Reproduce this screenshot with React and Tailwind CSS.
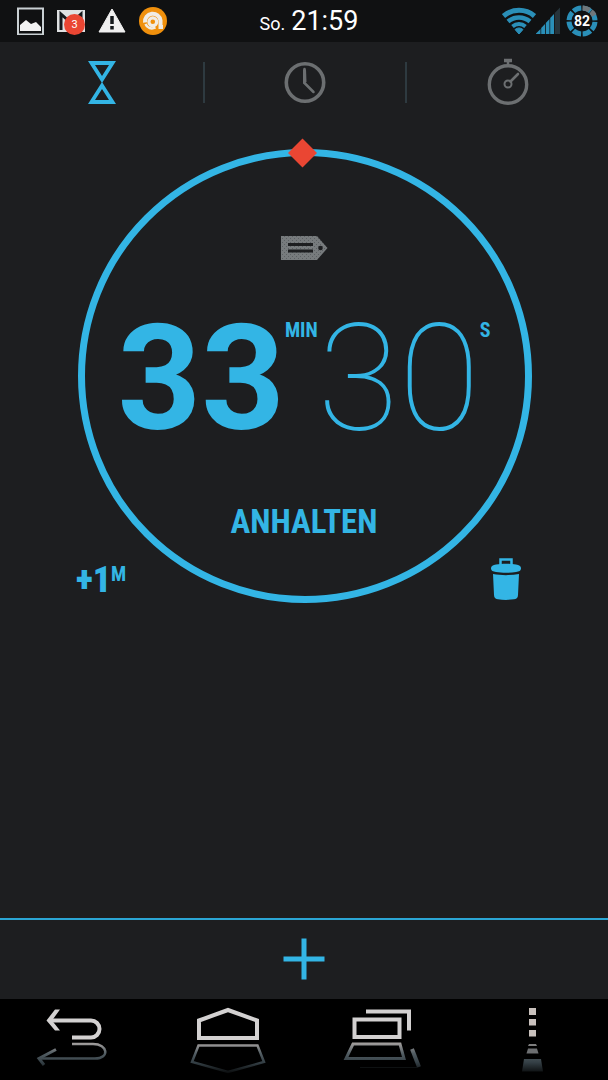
import React from 'react';

const tabs = [
  { id: 'timer', label: 'Timer', active: true },
  { id: 'clock', label: 'Uhr', active: false },
  { id: 'stopwatch', label: 'Stoppuhr', active: false },
];

const WifiIcon = () => (
  <svg viewBox="0 0 34 28" className="w-[34px] h-7" fill="none" stroke="#2a8fb8">
    <path d="M1.500 9a24 24 0 0 1 31 0" strokeWidth="5" />
    <path d="M6 14.500a17 17 0 0 1 22 0" strokeWidth="4.500" />
    <path d="M10.500 19.500a10 10 0 0 1 13 0" strokeWidth="4" />
    <path d="M13 22.500a6.500 6.500 0 0 1 8 0L17 27z" fill="#2a8fb8" />
  </svg>
);

const SignalIcon = () => (
  <svg viewBox="0 0 24 28" className="w-6 h-7" fill="#2a8fb8">
    <path d="M0 27V26.500L4.500 22V27zM5.200 27V21L9 17V27zM9.800 27V16L13.500 12V27zM14.200 27V11L18 7V27z" />
    <path d="M18.700 27V6L24 0.500V27z" fill="#26343b" />
  </svg>
);

const StatusBar = () => (
  <header className="h-[42px] shrink-0 bg-[#101112] px-4 grid grid-cols-[1fr_auto_1fr] items-center text-white">
    <div className="flex items-center gap-[13px]">
      <svg viewBox="0 0 28 28" className="w-7 h-7">
        <rect x="2" y="1.500" width="25" height="26" fill="none" stroke="#c9d0d3" strokeWidth="2" />
        <path d="M4 24v-6l6-5 5 4 5-2 5 5v4z" fill="#f2f2f2" />
      </svg>
      <div className="relative w-7 h-7">
        <svg viewBox="0 0 28 28" className="w-7 h-7">
          <rect x="0" y="3" width="28" height="22" fill="#dfe1e2" />
          <path d="M4 23V7l10 9 10-9v16" fill="none" stroke="#15191c" strokeWidth="3" />
          <circle cx="17.500" cy="17.500" r="10.500" fill="#ea4633" />
        </svg>
        <span className="absolute left-[7px] top-[7px] w-[21px] text-center text-[11px] leading-[21px]">3</span>
      </div>
      <svg viewBox="0 0 28 28" className="w-7 h-7">
        <path d="M14 2L27 25H1z" fill="#f0f0f0" stroke="#f0f0f0" strokeLinejoin="round" />
        <path d="M14 9v8M14 19v3.500" stroke="#15191c" strokeWidth="3.500" />
      </svg>
      <svg viewBox="0 0 28 28" className="w-7 h-7" fill="none" stroke="#f1ece4">
        <circle cx="14" cy="14" r="14" fill="#f0900c" stroke="none" />
        <path d="M6 15.500a7.800 7.800 0 1 1 15.500-2V20H24" strokeWidth="4" />
        <circle cx="13.800" cy="14.800" r="3.900" strokeWidth="3.200" />
        <path d="M6.500 17c1.500 4 6 5.500 10 3.500" strokeWidth="2.500" />
      </svg>
    </div>
    <div className="flex items-baseline gap-1.5 pl-2.5 leading-none">
      <span className="text-lg leading-none">So.</span>
      <span className="text-[27px] leading-none">21:59</span>
    </div>
    <div className="flex items-center justify-end -mr-1.5">
      <WifiIcon />
      <SignalIcon />
      <div className="relative ml-1.5 w-8 h-8">
        <svg viewBox="0 0 32 32" className="w-8 h-8" fill="none" strokeWidth="5">
          <circle cx="16" cy="16" r="13" pathLength="100" stroke="#2a8fb8" strokeDasharray="10.500 2" transform="rotate(-86 16 16)" />
          <path d="M16.500 3a13 13 0 0 1 7 2.200M25 6.500a13 13 0 0 1 3.200 4" stroke="#70777b" />
        </svg>
        <span className="absolute inset-0 text-center text-sm leading-8 font-bold">82</span>
      </div>
    </div>
  </header>
);

const TabIcon = ({ id }) => {
  if (id === 'timer') {
    return (
      <svg viewBox="0 0 48 48" className="w-12 h-12" fill="#33b5e5" fillRule="evenodd">
        <path d="M10 3H38L24 25zM17 7L24 18L31 7z" />
        <path d="M10 46H38L24 24zM17 42L24 31L31 42z" />
      </svg>
    );
  }
  if (id === 'clock') {
    return (
      <svg viewBox="0 0 48 48" className="w-12 h-12" fill="none" stroke="#6c6f71">
        <circle cx="24" cy="24.500" r="18.700" strokeWidth="3.600" />
        <path d="M23.500 11V25L32.500 34" strokeWidth="2.500" strokeLinecap="round" strokeLinejoin="round" />
        <path d="M22 11.500H25L25.500 24L22 26z" fill="#6c6f71" stroke="none" />
      </svg>
    );
  }
  return (
    <svg viewBox="0 0 48 48" className="w-12 h-12" fill="none" stroke="#6c6f71">
      <circle cx="24" cy="26.500" r="18.700" strokeWidth="3.400" />
      <path d="M20 2.500H28" strokeWidth="3.500" />
      <path d="M24 3V7" strokeWidth="2.500" />
      <circle cx="24" cy="26" r="3.500" strokeWidth="2" />
      <path d="M26.500 23.500L34 16" strokeWidth="2.600" strokeLinecap="round" />
    </svg>
  );
};

const TabBar = () => (
  <nav className="h-20 shrink-0 flex items-center pl-0.5">
    {tabs.map((tab, idx) => (
      <button
        key={tab.id}
        aria-label={tab.label}
        aria-pressed={tab.active}
        className={`h-[41px] flex-1 flex items-center justify-center ${idx > 0 ? 'border-l-2 border-[#2e3a40]' : ''}`}
      >
        <TabIcon id={tab.id} />
      </button>
    ))}
  </nav>
);

const TagIcon = () => (
  <svg viewBox="0 0 48 24" className="w-12 h-6">
    <defs>
      <pattern id="grain" width="4" height="4" patternUnits="userSpaceOnUse">
        <rect width="4" height="4" fill="#777b7d" />
        <rect width="1" height="1" fill="#5b5f62" />
        <rect x="2" y="2" width="1" height="1" fill="#5b5f62" />
      </pattern>
    </defs>
    <path d="M1 0H37L47.500 12L37 24H1z" fill="url(#grain)" />
    <path d="M8 8.500H33M8 15H33" stroke="#1d1e20" strokeWidth="3" />
    <circle cx="40.500" cy="12" r="2.300" fill="#1d1e20" />
  </svg>
);

const TimerDial = () => (
  <section className="grid w-3/4 mx-auto mt-[27px] text-[#33b5e5]">
    {/* Ring with start marker */}
    <svg viewBox="0 0 456 456" className="[grid-area:1/1] w-full overflow-visible">
      <circle cx="229" cy="227" r="223.500" fill="none" stroke="#33b5e5" strokeWidth="7" />
      <path d="M226.500 -10.500L241 4L226.500 18.500L212 4z" fill="#ea4633" />
    </svg>

    {/* Label, remaining time, stop */}
    <div className="[grid-area:1/1] flex flex-col items-center pt-[87px]">
      <button aria-label="Label"><TagIcon /></button>
      <div className="mt-[46px] flex items-start leading-[148px]">
        <span className="text-[146px] font-bold">33</span>
        <span className="text-xl font-bold mt-3.5 leading-5 font-['Roboto_Condensed','Liberation_Sans_Narrow',Roboto,sans-serif]">MIN</span>
        <span className="text-[148px] font-thin">30</span>
        <span className="text-xl font-bold mt-3.5 leading-5 font-['Roboto_Condensed','Liberation_Sans_Narrow',Roboto,sans-serif]">S</span>
      </div>
      <button className="mt-12 text-[33px] leading-10 font-bold font-['Roboto_Condensed','Liberation_Sans_Narrow',Roboto,sans-serif]">
        ANHALTEN
      </button>
    </div>

    {/* Corner actions */}
    <div className="[grid-area:1/1] self-end flex items-end justify-between pb-1 pointer-events-none">
      <button className="pointer-events-auto flex items-start pb-px font-bold font-['Roboto_Condensed','Liberation_Sans_Narrow',Roboto,sans-serif]">
        <span className="text-4xl font-black">+1</span>
        <span className="text-xl leading-7">M</span>
      </button>
      <button aria-label="Löschen" className="pointer-events-auto mr-2.5">
        <svg viewBox="0 0 32 44" className="w-8 h-11" fill="#33b5e5">
          <path d="M10.500 8V2.500H21.500V8" fill="none" stroke="#33b5e5" strokeWidth="2.500" />
          <path d="M1 11c0-2 2-3 5-3.500c6-1 14-1 20 0c3 .5 5 1.500 5 3.500c0 3-2 3.500-5 4c-6 1-14 1-20 0c-3-.5-5-1-5-4z" />
          <path d="M3 17c8 1.500 18 1.500 26 0L28 38c0 3-2 4-4 4.300c-5 .8-11 .8-16 0c-2-.3-4-1.300-4-4.300z" />
        </svg>
      </button>
    </div>
  </section>
);

const AddBar = () => (
  <div className="h-[81px] shrink-0 border-t-2 border-[#2ba6d4] flex items-center justify-center pb-0.5">
    <button aria-label="Timer hinzufügen">
      <svg viewBox="0 0 42 42" className="w-[42px] h-[42px]" stroke="#33b5e5" strokeWidth="5">
        <path d="M21 0.500V41.500M0.500 21H41.500" />
      </svg>
    </button>
  </div>
);

const NavBar = () => (
  <footer className="h-[81px] shrink-0 bg-black grid grid-cols-4 place-items-center">
    <svg width="0" height="0" className="absolute">
      <defs>
        <linearGradient id="fade" gradientUnits="userSpaceOnUse" x1="0" y1="38" x2="0" y2="68">
          <stop offset="0" stopColor="#a39f9e" />
          <stop offset="0.35" stopColor="#525d63" />
          <stop offset="0.65" stopColor="#343f45" />
          <stop offset="1" stopColor="#0a0c0d" />
        </linearGradient>
      </defs>
    </svg>
    <button aria-label="Zurück">
      <svg viewBox="0 0 100 70" className="w-[100px] h-[70px]" fill="none" stroke="#d3d1d1" strokeWidth="4">
        <path d="M23 15.500H65a8.500 8.500 0 0 1 0 17H46" />
        <path d="M29 4.500H34L26 15.500L34 25.500H29L20.500 15.500z" fill="#d3d1d1" stroke="none" />
        <path d="M46 39H67c15 0 17 14.500 2 14.500H14" stroke="url(#fade)" strokeWidth="2.500" />
        <path d="M30 44.500L13 53.500L18 60" stroke="url(#fade)" strokeWidth="3" />
      </svg>
    </button>
    <button aria-label="Startseite">
      <svg viewBox="0 0 100 70" className="w-[100px] h-[70px]" fill="none" stroke="#d3d1d1" strokeWidth="4">
        <path d="M21 15.500L50 5L79 15.500V33H21z" />
        <path d="M20.500 40.500H79.500L86 57L50 67L14 57z" stroke="url(#fade)" strokeWidth="2.500" />
      </svg>
    </button>
    <button aria-label="Letzte Apps">
      <svg viewBox="0 0 100 70" className="w-[100px] h-[70px]" fill="none" stroke="#d3d1d1" strokeWidth="4">
        <rect x="24.500" y="14.500" width="45" height="17.500" />
        <path d="M36 6.500H79V25.500" />
        <path d="M23 39H70L74 53.500H16z" stroke="url(#fade)" strokeWidth="3" />
        <path d="M82 44L89 62" stroke="url(#fade)" />
        <path d="M30 62.500H88" stroke="#0e1112" strokeWidth="1" />
      </svg>
    </button>
    <button aria-label="Menü">
      <svg viewBox="0 0 100 70" className="w-[100px] h-[70px]" fill="#c9c1bd">
        <path d="M47 3h7v7h-7zM47 14h7v6.500h-7zM47 25h7v6.500h-7z" />
        <path d="M47 39h7l1 2h-9z" fill="#7d7d7d" />
        <path d="M46 43.500h9l1.500 5h-12z" fill="#6d6f71" />
        <path d="M42 54h17l2 12.500H40z" fill="url(#fade)" />
      </svg>
    </button>
  </footer>
);

const App = () => (
  <div className="min-h-screen flex flex-col bg-[#1d1e20] font-[Roboto,sans-serif]">
    <StatusBar />
    <TabBar />
    <main className="flex-1">
      <TimerDial />
    </main>
    <AddBar />
    <NavBar />
  </div>
);

export default App;
